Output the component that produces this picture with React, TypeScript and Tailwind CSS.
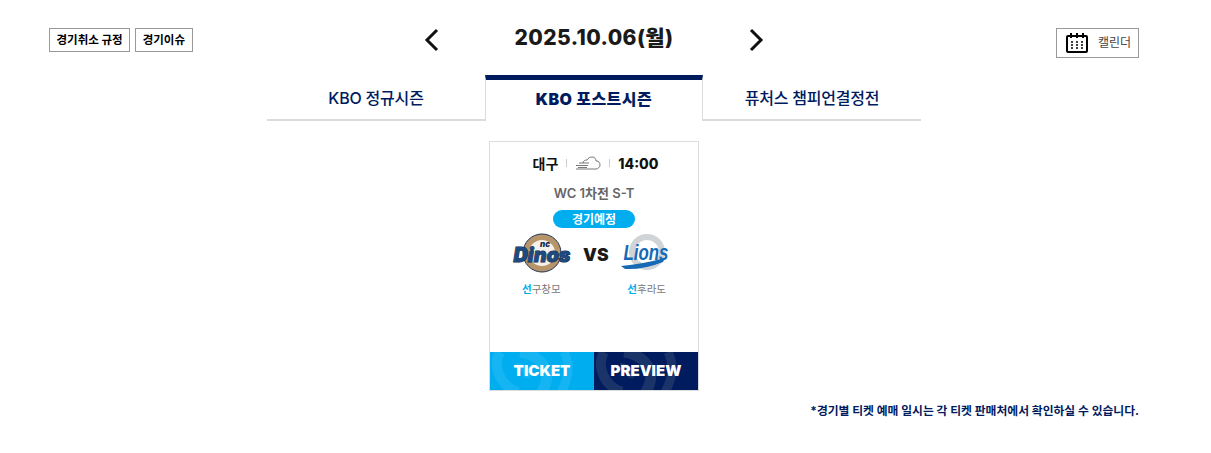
import React from 'react';

const font = "font-['Inter','Noto_Sans_CJK_KR',sans-serif]";

function Swirl({ color }: { color: string }) {
  return (
    <svg viewBox="0 0 104 38" className="absolute inset-0 w-full h-full" fill="none">
      <path d="M10 0C2 14 10 34 28 40" stroke={color} strokeWidth="10" />
      <path d="M30 0c16 2 30 14 26 30-1 4-2 6-4 10" stroke={color} strokeWidth="11" />
      <path d="M74 0c6 12 5 26-3 40" stroke={color} strokeWidth="9" />
      <path d="M26 14c7 0 12 5 11 12" stroke={color} strokeWidth="6" />
    </svg>
  );
}

function DinosLogo() {
  return (
    <svg viewBox="0 0 60 40" className="w-[60px] h-[40px] overflow-visible">
      <circle cx="30" cy="20" r="19" fill="#b8946a" stroke="#1d3557" strokeWidth="1" />
      <circle cx="30" cy="20" r="13" fill="#f5f1ea" />
      <text x="33" y="13.500" textAnchor="middle" fontSize="8" fontWeight="900" fontStyle="italic" fill="#14284b" fontFamily="Inter, sans-serif">nc</text>
      <text x="30" y="29" textAnchor="middle" fontSize="20" fontWeight="900" fontStyle="italic" fill="#1d4a80" stroke="#12233f" strokeWidth="0.9" paintOrder="stroke" fontFamily="Inter, sans-serif" textLength="57" lengthAdjust="spacingAndGlyphs">Dinos</text>
    </svg>
  );
}

function LionsLogo() {
  return (
    <svg viewBox="0 0 50 40" className="w-[50px] h-[40px] overflow-visible">
      <circle cx="26" cy="19" r="18" fill="#d0d3d7" />
      <circle cx="26" cy="19" r="12" fill="#fff" />
      <path d="M0 33Q22 31 44 25L42 29Q22 37 4 36Z" fill="#1669b5" />
      <text x="25" y="27" textAnchor="middle" fontSize="22" fontWeight="700" fontStyle="italic" fill="#1669b5" fontFamily="'Liberation Sans', sans-serif" textLength="45" lengthAdjust="spacingAndGlyphs">Lions</text>
    </svg>
  );
}

function Tab({ label, active, width }: { label: string; active?: boolean; width: string }) {
  return (
    <div
      className={`${width} h-[46px] flex items-center justify-center text-[16px] text-[#001b5e] ${
        active
          ? 'border-t-[5px] border-t-[#001b5e] border-x border-x-[#dcdcdc] font-black tracking-[0.5px] pb-[3px]'
          : 'border-b-2 border-b-[#dcdcdc] font-medium tracking-[-0.2px] pt-[1px]'
      }`}
    >
      {label}
    </div>
  );
}

export default function App() {
  return (
    <div className={`${font} w-[1211px] h-[453px] bg-white pl-[49px] pr-[72px] pt-[24px] text-[#1a1a1a]`}>
      {/* top controls */}
      <div className="h-[51px] grid grid-cols-[1fr_auto_1fr]">
        <div className="flex gap-[5px] pt-[4px] items-start">
          <button className="h-[24px] px-[6.5px] pt-px border border-[#999] text-[11.5px] font-bold text-black">경기취소 규정</button>
          <button className="h-[24px] px-[6.5px] pt-px border border-[#999] text-[11.5px] font-bold text-black">경기이슈</button>
        </div>
        <div className="flex items-start">
          <svg viewBox="0 0 16 24" className="w-[16px] h-[24px] mt-[4px]" fill="none" stroke="#111" strokeWidth="3">
            <path d="M13 2 3 12l10 10" />
          </svg>
          <div className="w-[308px] text-center text-[21px] leading-[28px] font-extrabold tracking-[0.4px]">2025.10.06(월)</div>
          <svg viewBox="0 0 16 24" className="w-[16px] h-[24px] mt-[4px]" fill="none" stroke="#111" strokeWidth="3">
            <path d="M3 2l10 10L3 22" />
          </svg>
        </div>
        <div className="flex justify-end pt-[4px] items-start">
          <button className="w-[83px] h-[30px] border border-[#999] flex items-center pl-[9px] gap-[10px] text-[12px] text-[#444]">
            <svg viewBox="0 0 22 20" className="w-[22px] h-[20px]" fill="none" stroke="#000" strokeWidth="2">
              <rect x="1" y="3" width="20" height="16" rx="1" />
              <path d="M5 0v5M11 0v5M17 0v5" />
              <path d="M5 9h2M10 9h2M15 9h2M5 12h2M10 12h2M15 12h2M5 15h2M10 15h2M15 15h2" strokeWidth="1.4" />
            </svg>
            캘린더
          </button>
        </div>
      </div>

      {/* tabs */}
      <div className="flex justify-center">
        <Tab label="KBO 정규시즌" width="w-[218px]" />
        <Tab label="KBO 포스트시즌" width="w-[218px]" active />
        <Tab label="퓨처스 챔피언결정전" width="w-[218px]" />
      </div>

      {/* game card */}
      <div className="flex justify-center mt-[20px]">
        <div className="w-[210px] h-[250px] border border-[#dcdcdc] flex flex-col">
          <div className="flex items-center justify-center h-[42px] pl-[3px] text-[14px] font-bold text-[#111]">
            <span>대구</span>
            <span className="w-px h-[8px] bg-[#ccc] mx-[8px]" />
            <svg viewBox="0 0 26 14" className="w-[26px] h-[14px]" fill="none" stroke="#555" strokeWidth="0.8">
              <path d="M8 7c0-2 2-3 4-3 1-2 3-3 5-3 3 0 4 2 4 4 3 0 4 2 4 4s-2 4-4 4H1M4 7h10M1 9.500h12M3 11.500h9" />
            </svg>
            <span className="w-px h-[8px] bg-[#ccc] mx-[8px]" />
            <span className="text-[14px] font-extrabold">14:00</span>
          </div>
          <div className="text-center text-[13px] leading-[16px] font-semibold text-[#666] mt-[1px]">WC 1차전 S-T</div>
          <div className="self-center w-[82px] h-[18px] mt-[9px] rounded-full bg-[#00aeef] text-white text-[12px] leading-[19px] font-bold text-center">경기예정</div>
          <div className="flex items-center pl-[22px] pr-[27px] mt-[5px] h-[40px]">
            <DinosLogo />
            <span className="ml-[11px] pt-[4px] text-[17.5px] font-black text-[#1a1a1a]">VS</span>
            <span className="ml-auto"><LionsLogo /></span>
          </div>
          <div className="flex justify-between px-[32px] mt-[10px] text-[10.5px] leading-[14px] text-[#777]">
            <span><b className="text-[#00aeef]">선</b>구창모</span>
            <span><b className="text-[#00aeef]">선</b>후라도</span>
          </div>
          <div className="mt-auto flex h-[38px]">
            <div className="relative flex-1 bg-[#00aeef] flex items-center justify-center text-white text-[15px] font-black overflow-hidden">
              <Swirl color="#14b5f2" />
              <span className="relative">TICKET</span>
            </div>
            <div className="relative flex-1 bg-[#001b5e] flex items-center justify-center text-white text-[15px] font-black overflow-hidden">
              <Swirl color="#1a3369" />
              <span className="relative">PREVIEW</span>
            </div>
          </div>
        </div>
      </div>

      <p className="mt-[12px] text-right text-[11.8px] leading-[16px] font-bold text-[#001b5e]">*경기별 티켓 예매 일시는 각 티켓 판매처에서 확인하실 수 있습니다.</p>
    </div>
  );
}
